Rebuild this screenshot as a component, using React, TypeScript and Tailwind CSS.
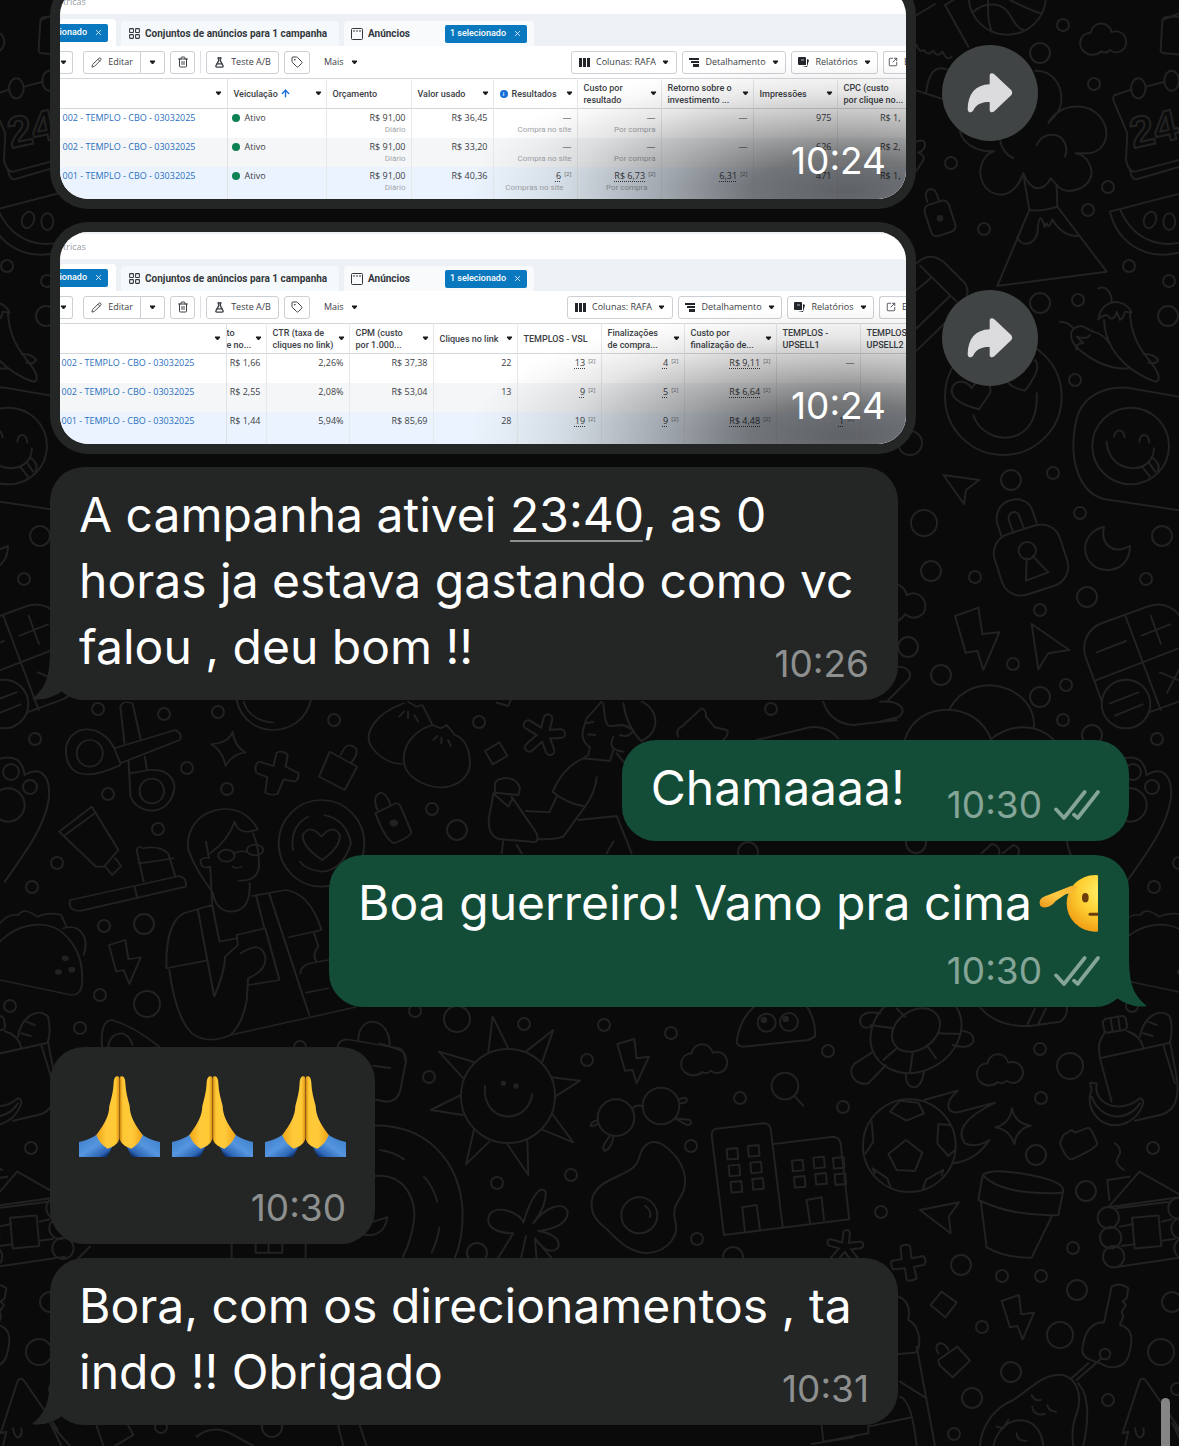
import type { ReactNode } from 'react';
import { ArrowUp, FlaskConical, LayoutGrid, Pencil, SquareArrowOutUpRight, Tag, Trash2, X } from 'lucide-react';

// --- Wallpaper ---

// x, y, radius
const dots = [
    [1063, 25, 6], [1040, 53, 10], [1094, 84, 6], [951, 163, 6], [984, 229, 6], [1108, 187, 6], [1088, 210, 6],
    [1129, 266, 6], [1169, 281, 6], [1168, 316, 10], [1040, 303, 10], [1078, 300, 6], [1075, 380, 6], [910, 443, 12],
    [1011, 480, 10], [1053, 473, 6], [924, 523, 13], [1080, 513, 6], [1162, 536, 10], [931, 571, 10], [975, 577, 6],
    [1146, 579, 6], [1087, 597, 10], [1040, 610, 6], [908, 647, 10], [1013, 664, 6], [941, 675, 10], [1066, 685, 6],
    [1040, 697, 10], [1063, 720, 6], [1092, 735, 10], [1157, 739, 6], [1133, 772, 8], [1152, 787, 7], [1154, 887, 6],
    [1179, 863, 6], [1132, 1006, 6], [916, 843, 10], [98, 709, 6], [164, 714, 6], [218, 712, 6], [334, 720, 6],
    [187, 768, 6], [108, 794, 6], [227, 789, 6], [158, 829, 6], [104, 926, 6], [144, 924, 10], [100, 995, 6],
    [147, 1004, 13], [80, 1028, 6], [479, 722, 6], [432, 809, 6], [457, 830, 10], [415, 1011, 6], [457, 1019, 13],
    [524, 1024, 6], [604, 1025, 6], [300, 1047, 6], [429, 1077, 6], [587, 1060, 6], [671, 1033, 6], [740, 1098, 6],
    [691, 1146, 6], [571, 1175, 6], [497, 1183, 6], [697, 1239, 6], [477, 1253, 10], [733, 1257, 10], [828, 1051, 6],
    [1040, 1049, 6], [1070, 1066, 13], [843, 1107, 6], [1041, 1098, 6], [1036, 1155, 10], [1153, 1148, 6],
    [1086, 1191, 10], [881, 1212, 6], [1073, 1248, 6], [961, 1265, 10], [1002, 1276, 6], [1041, 1276, 6],
    [1077, 1290, 10], [1172, 1302, 10], [982, 1327, 6], [1060, 1335, 13], [1161, 1352, 13], [1011, 1372, 10],
    [972, 1398, 10], [1108, 1400, 6], [1177, 1389, 6], [954, 1434, 6], [161, 1427, 6], [272, 1427, 10],
    [771, 709, 6], [748, 852, 10],
];

const windows = [
    [1040, 447], [1104, 438], [1046, 497], [1111, 488], [1052, 546], [1117, 537],
    [1236, 482], [1300, 473], [1242, 531], [1306, 522], [1359, 474], [1364, 523],
];

const cloud = 'M560 160C530 145 535 100 572 98C580 62 625 62 635 96C675 85 692 130 668 150C655 160 640 158 630 150C620 160 610 158 604 154C590 168 570 165 560 160Z';

function Wallpaper() {
    return (
        <svg aria-hidden="true" className="absolute top-0 left-0" width="1179" height="1446" fill="none" stroke="#222222" strokeLinecap="round" strokeLinejoin="round">
            <g id="doodles">
                <g strokeWidth="2">
                    {dots.map(([x, y, r]) => <circle key={`${x}-${y}`} cx={x} cy={y} r={r} />)}
                </g>

                {/* Ball, volcano, calendar, melon, peppers, smileys */}
                <g transform="translate(900 0) scale(.3333)" strokeWidth="6">
                    <circle cx="322" cy="-12" r="116" />
                    <path d="M220 35C260 0 310 10 330 45S360 88 372 90M265 -5C262 40 265 70 275 95M330 0C370 20 400 35 422 40" />
                    <path d="M50 45L105 12M160 0L135 15L205 140M50 135Q58 160 72 150Q85 170 100 152Q112 175 128 155Q140 185 155 170M78 280C85 220 105 195 140 208M50 272L130 298" />
                    <path d={cloud} />
                    <path d="M850 50L800 50Q788 52 787 65L782 150Q781 160 795 160L850 165M787 60L837 40" />
                    <path d="M405 212C460 210 490 260 483 310C480 335 460 355 445 368C480 310 560 305 600 350C635 395 620 450 570 460L527 460C565 465 580 510 573 530C560 570 500 585 475 560L452 535C440 560 425 565 410 565C390 560 378 540 370 520C355 560 335 585 300 584C250 580 235 530 243 500C248 475 265 460 282 453C230 458 190 430 180 395M300 420C305 450 320 465 340 475M410 435C430 395 480 395 495 430Q503 450 495 470" />
                    <path d="M370 520L388 630L292 858L620 815L472 620L470 555M388 630Q430 635 472 620M352 710C360 740 400 740 412 700Q415 655 422 655Q430 660 434 682L440 670Q446 690 457 658C480 700 510 710 540 708" />
                    <path d="M695 268L645 285Q636 290 642 305L682 400L678 480Q685 515 705 515L860 474M690 510Q695 540 710 538L860 494M738 260L795 245" />
                    <ellipse cx="715" cy="265" rx="22" ry="30" />
                    <ellipse cx="815" cy="242" rx="22" ry="30" />
                    <text x="700" y="445" fontSize="130" fontWeight="700" transform="rotate(-12 700 445)" className="font-['Liberation_Sans',sans-serif]">24</text>
                    <path d="M630 635L900 565M630 635C660 760 790 800 900 730M662 632C700 720 780 745 850 725" />
                    <ellipse cx="750" cy="660" rx="18" ry="25" transform="rotate(20 750 660)" />
                    <ellipse cx="808" cy="665" rx="18" ry="25" />
                    <path d="M50 425Q75 415 75 435Q75 450 55 458Q75 465 70 480L50 512" />
                    <rect x="82" y="606" width="76" height="98" rx="18" transform="rotate(-18 120 655)" />
                    <path d="M82 605C70 575 85 565 97 568C110 570 112 590 117 602" />
                    <circle cx="120" cy="655" r="7" fill="#222222" />
                    <path d="M50 790C80 760 110 770 130 785L195 850Q208 870 200 885M60 797L170 905M95 832L50 870M150 888L50 985M185 920L50 1052" />
                    <path d="M480 965Q505 965 520 985M545 1055C500 1020 505 980 545 978L580 995M545 1055C590 1090 640 1110 690 1105M595 865C620 855 635 880 635 905M595 958C600 920 630 900 660 908Q685 915 695 938L675 935Q670 955 660 960L650 935Q645 960 630 955Q622 935 595 958M612 960C615 1040 670 1110 765 1145Q780 1145 775 1125C765 1085 695 1050 690 940M730 1062Q760 1060 775 1080Q765 1095 745 1088M580 995C600 1000 615 1010 628 1030M530 1050Q525 1030 550 1030L530 1010Q560 1020 570 1005" />
                    <circle cx="310" cy="1190" r="175" />
                    <path d="M220 1245C250 1340 420 1350 410 1180M237 1228C180 1215 145 1190 158 1160C170 1140 200 1140 215 1165C230 1130 280 1140 270 1180ZM375 1172C340 1165 315 1150 320 1125M375 1172C400 1140 425 1100 405 1080" />
                    <circle cx="692" cy="1338" r="115" />
                    <path d="M620 1325C625 1425 760 1430 762 1345M642 1310C648 1285 670 1285 674 1312M718 1325C722 1298 745 1298 748 1328M728 1402L750 1430M745 1385L765 1415M755 1372Q785 1390 772 1415" />
                    <path d="M860 1194L680 1163C600 1160 555 1195 535 1240C500 1350 525 1490 630 1500L900 1540" />
                </g>

                {/* Padlock, moon, bolt, calculator */}
                <g transform="translate(880 460) scale(.3333)" strokeWidth="6">
                    <path d="M190 45L298 60L258 90L252 132ZM455 492L568 570L505 580L475 628Z" />
                    <rect x="350" y="205" width="206" height="190" rx="60" transform="rotate(-18 453 300)" />
                    <path d="M365 230L350 185C345 110 435 100 455 145L470 188M400 218L386 180C385 150 415 150 418 170L432 205M440 295L438 362L505 337L458 288" />
                    <circle cx="442" cy="272" r="26" />
                    <path d="M672 200C590 220 600 330 685 330C725 328 750 300 750 258C700 285 660 255 672 200Z" />
                    <path d="M225 468L295 443L307 522L358 517L310 630L292 572L257 578Z" />
                    <rect x="632" y="455" width="310" height="300" rx="80" transform="rotate(-20 787 605)" />
                    <path d="M735 465L842 750M645 662L930 552M650 577L738 543M785 527L870 493M812 467L843 552M840 637L900 662M862 697L897 630" />
                    <circle cx="738" cy="732" r="73" fill="#0a0a0a" />
                    <path d="M690 730L775 697M705 767L788 733" />
                    <path d="M75 838C110 720 290 720 333 838C390 790 470 790 520 838M210 745C280 620 470 680 462 803" />
                    <path d="M45 370Q75 380 80 405C120 385 150 430 130 460Q105 485 75 463Q65 480 45 485M40 622C80 615 105 640 80 665L25 720M0 725C60 720 85 750 55 772L0 785" />
                </g>

                {/* Palette edge */}
                <g transform="translate(900 740) scale(.3333)" strokeWidth="6">
                    <circle cx="690" cy="195" r="50" />
                    <path d="M660 58Q730 35 740 105C790 75 820 110 812 180C800 260 740 340 680 425M500 300Q505 330 515 350M245 340L275 312Q300 315 298 342M308 340L340 315Q362 320 355 345" />
                </g>

                {/* Scissors, dumplings, reader, coffee, taco */}
                <g transform="translate(0 640) scale(.408 .3333)" strokeWidth="5">
                    <path d="M305 310L295 200Q300 180 325 190L345 300M280 325L430 270Q450 285 440 300L295 370ZM280 325C250 250 175 250 162 320C158 400 200 430 295 375M315 365L320 470C340 530 420 530 428 440Q420 385 365 390L318 400M355 350L360 388" />
                    <ellipse cx="220" cy="340" rx="32" ry="40" />
                    <ellipse cx="372" cy="453" rx="30" ry="37" />
                    <path d="M570 275Q575 320 602 338Q570 340 553 378Q545 330 517 312Q560 310 570 275Z" />
                    <path d="M678 338Q695 330 705 345L700 380L732 400Q732 420 722 425L695 418L680 462Q665 468 650 458L655 412L628 398Q622 375 635 365L670 378Z" />
                    <path d="M808 335L875 380L845 450L782 410ZM835 345Q850 300 872 325Q880 340 860 370" />
                    <path d="M990 190C920 220 890 280 910 320Q940 370 985 372M1060 255C990 280 970 370 1010 410C1070 470 1150 440 1152 370Q1150 300 1115 285M1060 255L1080 265L1095 255L1115 285M1000 185L1020 200L1035 195L1060 255M978 230L990 215M1000 215V235M1015 225L1025 245M1062 300L1072 288M1082 292V310M1098 300L1105 318" />
                    <path d="M580 180C600 300 740 300 762 180M597 185Q610 240 670 248" />
                    <path d="M145 575L225 500L290 630L255 680L235 680ZM160 585L232 520M258 680L275 705L297 678L282 655" />
                    <path d="M172 780L440 708Q460 715 455 740L200 812Q165 815 172 780ZM352 725L335 630Q340 615 350 625Q390 615 412 640L430 710M340 670Q380 665 425 655M330 742L337 775" />
                    <path d="M520 790L515 680Q490 690 492 660Q500 650 512 655L505 605M515 640Q560 600 575 545Q585 590 632 568Q600 500 540 508C470 520 450 600 465 640Q480 690 520 755M620 580Q635 620 635 680Q630 725 585 722M522 760Q530 815 570 815Q615 810 612 730M572 640Q590 630 605 636M570 680Q580 688 592 680" />
                    <ellipse cx="555" cy="647" rx="20" ry="18" />
                    <ellipse cx="625" cy="630" rx="20" ry="16" />
                    <ellipse cx="788" cy="610" rx="105" ry="130" />
                    <path d="M718 630Q710 560 755 530M795 525Q850 540 860 610Q840 690 790 695Q750 690 735 665M790 660Q740 620 742 585Q760 550 788 590Q815 550 833 585Q835 620 790 660Z" />
                    <path d="M920 520L970 490Q978 488 982 500L1008 575Q1008 590 965 610Q945 600 920 520ZM925 510Q910 465 935 458Q950 465 957 495" />
                    <circle cx="965" cy="549" r="8" fill="#222222" />
                    <path d="M520 795L450 820Q405 850 408 985L505 962M485 810L525 1070Q550 1000 552 950L583 915L580 885L650 865L685 1020L610 1035M520 795L538 905L580 895M618 768L700 750Q760 760 788 870L708 892M628 768L648 865M660 762L758 1125M590 940Q640 900 650 950Q655 990 608 1015L605 1080Q595 1150 565 1185Q510 1215 470 1180Q430 1130 415 990M565 1185L870 1102M805 960L760 970Q735 980 737 1000M750 1058L805 1045M770 880L780 920Q765 940 775 965" />
                    <path d="M267 915L307 900L315 958L345 952L317 1032L303 990L285 995Z" />
                    <path d="M0 850Q20 820 45 825Q60 800 90 830Q120 815 150 825L162 858M-30 960C10 850 110 830 155 880C200 930 205 990 200 1040Q195 1065 175 1065L0 1020L-60 1010M155 865C195 850 220 890 205 945" />
                    <g fill="#222222">
                        <circle cx="160" cy="955" r="6" />
                        <circle cx="143" cy="996" r="6" />
                        <circle cx="176" cy="989" r="6" />
                    </g>
                    <path d="M250 1220Q245 1140 275 1140Q330 1160 390 1220M265 1220Q270 1180 300 1180Q320 1190 325 1215M878 1200C880 1120 955 1130 955 1215M828 1220Q830 1195 860 1200L980 1225Q995 1240 992 1260" />
                </g>

                {/* Runner */}
                <g transform="translate(440 690) scale(.3333)" strokeWidth="6">
                    <path d="M135 183L178 157L202 198L158 223ZM170 38L205 48L212 30" />
                    <path d="M485 35L440 85L435 100Q415 150 450 172L445 195L430 205L510 213L520 180M440 100L460 95M445 133L465 135M430 205Q370 230 338 305Q380 340 430 348M470 262Q465 310 435 350L370 440Q340 450 290 447M350 320L328 367L258 363M215 320L290 430Q300 460 275 455L175 447Q130 430 155 345M155 340L160 310L205 350L218 325M165 290Q160 270 190 265Q230 260 240 295L235 315L165 308ZM415 390L530 378L575 490M530 190L555 220M490 40Q495 110 510 108L550 105L580 120Q570 145 540 135M520 140Q500 180 550 185M550 40Q560 110 605 155M605 35C660 60 660 130 605 152M190 450L185 490M230 465L245 490M520 455L500 490" />
                    <path d="M715 140Q705 120 725 110L785 55Q800 60 798 80L825 112L860 120Q870 130 850 150M950 150L1110 112Q1160 105 1195 145M1150 35Q1170 100 1240 105L1370 90" />
                    <path d="M312 133L324 86M312 133L362 131M312 133L330 182M312 133L268 172M312 133L264 104" strokeWidth="32" />
                    <path d="M312 133L324 86M312 133L362 131M312 133L330 182M312 133L268 172M312 133L264 104" strokeWidth="20" stroke="#0a0a0a" />
                </g>

                {/* Sun, glasses, egg, buildings */}
                <g transform="translate(380 1000) scale(.3333)" strokeWidth="6">
                    <circle cx="384" cy="288" r="141" />
                    <path d="M325 155L338 50L385 145M437 155L520 90L485 190M515 232L600 242L525 290M517 342L580 427L485 388M442 418L445 525L382 432M328 425L258 493L282 388M248 345L152 330L243 285M250 235L177 155L285 187M315 258C305 370 440 380 457 283" />
                    <circle cx="370" cy="250" r="5" fill="#222222" />
                    <circle cx="408" cy="258" r="5" fill="#222222" />
                    <path d="M712 132L763 117L770 175L807 170L770 250L758 210L735 212Z" />
                    <path d={cloud} transform="translate(363 62)" />
                    <circle cx="708" cy="353" r="55" />
                    <circle cx="843" cy="318" r="55" />
                    <path d="M757 328Q765 312 790 318M895 300Q925 285 920 305Q910 312 897 308M885 355L930 360Q940 375 920 375L885 355M655 360Q630 365 632 378Q645 380 655 370M690 408Q660 445 675 453Q695 445 700 410" />
                    <path d="M780 465C790 430 820 415 850 435C900 470 925 520 912 570C895 610 875 620 885 660C900 700 870 755 800 760C730 755 700 700 660 670C620 630 625 570 690 540C740 515 770 510 780 465Z" />
                    <circle cx="778" cy="646" r="54" />
                    <path d="M795 618Q815 630 810 652" />
                    <path d="M1032 705L995 405Q995 388 1010 386L1150 370Q1168 370 1172 385L1208 680M1180 435Q1182 430 1200 430L1360 410Q1378 412 1382 430L1408 658L1032 705M1095 695L1087 622L1130 615L1140 690M1290 668L1280 600L1325 592L1332 660" />
                    {windows.map(([x, y]) => <rect key={`${x}-${y}`} x={x} y={y} width="32" height="32" transform={`rotate(-5 ${x} ${y})`} />)}
                    <path d="M1070 125Q1080 50 1135 10M1275 10Q1310 60 1305 110L1285 120L1090 140Q1072 140 1070 125" />
                    <circle cx="1160" cy="68" r="27" />
                    <circle cx="1227" cy="66" r="27" />
                    <circle cx="1152" cy="60" r="7" fill="#222222" />
                    <circle cx="1217" cy="57" r="7" fill="#222222" />
                    <circle cx="1215" cy="258" r="40" />
                    <path d="M1243 288L1270 317" />
                    <path d="M430 668C425 640 350 610 328 645C310 690 370 700 400 700L350 780M430 668C450 600 480 550 497 575C500 610 475 650 460 670C490 625 550 600 563 635C565 675 510 690 475 693C520 700 545 720 533 745C510 765 480 740 465 715L470 780M465 715L520 780M438 708L422 780" />
                    <path d="M-60 380C140 355 245 490 248 640Q248 720 225 772M0 450Q40 455 72 478M132 530Q160 560 172 605M178 683Q172 725 155 757M-30 530C80 510 110 610 102 660Q95 720 68 772M22 652C15 700 -20 715 -60 700M22 652L-20 665" />
                    <path d="M0 130L60 150Q78 155 78 185L60 275Q50 305 20 305L-20 298M-20 197L30 204" />
                </g>

                {/* Turtle, football, pot, cabin, key */}
                <g transform="translate(800 1000) scale(.3333)" strokeWidth="6">
                    <ellipse cx="348" cy="95" rx="142" ry="118" transform="rotate(-30 348 95)" />
                    <ellipse cx="348" cy="90" rx="78" ry="58" transform="rotate(-35 348 90)" />
                    <path d="M240 40Q180 30 180 65Q185 90 215 80M220 155L165 190C135 220 170 260 205 250L258 195M318 218Q315 262 345 262Q368 255 372 212M482 92Q525 95 520 125Q505 150 458 135M212 75L280 85M250 180L290 145M330 218L338 158M408 175L380 135M482 102L415 100M290 25L315 50" />
                    <path d="M540 22C580 70 640 80 690 78L780 65Q805 50 800 22M682 75L705 25M715 72L738 25" />
                    <path d={cloud} transform="translate(-10 92)" />
                    <circle cx="328" cy="437" r="139" />
                    <path d="M318 420L367 458L345 513L290 510L265 462ZM270 335L300 302L355 308L372 340L320 362ZM450 375L415 372L412 430L445 468L465 450M215 365L220 425L197 460M218 505L262 535L272 562M430 510L378 540L368 570M218 505L225 520M430 510L425 525" />
                    <path d="M372 300L473 272C430 310 440 345 480 335L585 308C500 350 465 390 495 430Q530 445 568 420Q530 480 460 490" />
                    <path d="M636 325Q645 370 692 377Q650 385 643 433Q630 390 587 382Q630 370 636 325Z" />
                    <path d="M790 405L815 390L825 398L865 383Q875 385 892 430Q890 445 815 478Q800 480 780 430Z" />
                    <path d="M548 525Q570 505 660 520Q790 540 790 572L775 645Q640 650 535 600ZM548 525Q600 580 750 580Q790 580 790 572M543 608L560 742Q620 775 695 773L755 650" />
                    <path d="M360 630L477 607L447 648L452 700Z" />
                    <rect x="910" y="52" width="70" height="42" rx="12" transform="rotate(-10 945 73)" />
                    <path d="M932 55L938 95M955 52L960 92M915 97C890 130 897 150 900 175L1110 128M900 175L935 305M980 93Q1020 105 1030 142M1020 110C1030 50 1080 20 1110 50Q1120 90 1110 125L1130 230Q1145 330 1080 345L1005 362M1090 135L1125 250M1045 65L1070 75M1030 100L1058 108" />
                    <path d="M870 248L890 250Q885 275 900 295C930 330 985 325 1020 295Q1035 300 1028 315C1000 390 900 400 872 320Q865 290 875 270ZM875 290C900 360 980 370 1020 310" />
                    <path d="M1018 515L925 622L1150 590ZM928 600L922 540L988 530M950 625L1110 605M960 680L1000 672M965 738L1005 733M1085 665L1115 658M1085 722L1125 716M945 802L1160 770M945 430Q970 450 955 470T972 510" />
                    <rect x="1000" y="650" width="80" height="92" transform="rotate(-5 1040 696)" />
                    <circle cx="925" cy="653" r="32" />
                    <circle cx="932" cy="713" r="32" />
                    <circle cx="941" cy="770" r="32" />
                    <circle cx="1137" cy="625" r="32" />
                    <circle cx="1146" cy="685" r="32" />
                    <circle cx="1155" cy="745" r="32" />
                    <path d="M135 740L140 700M135 740L180 735M135 740L92 728M135 740L100 780M135 740L165 780" strokeWidth="26" />
                    <path d="M135 740L140 700M135 740L180 735M135 740L92 728M135 740L100 780M135 740L165 780" strokeWidth="14" stroke="#0a0a0a" />
                    <path d="M302 740Q315 730 330 738L335 775L370 768Q382 780 372 795L342 800L350 835Q335 845 320 840L315 805L280 808Q270 795 275 782L305 778Z" />
                    <path d="M425 875L470 908L436 952L392 915Z" />
                    <path d="M605 903L657 885L664 943L702 938L668 1018L652 978L630 982Z" />
                    <path d="M415 1080L472 1040L510 1082L458 1132L418 1095ZM415 1060C395 1030 430 1015 445 1050" />
                    <path d="M912 968L935 860Q960 845 985 865L980 895L968 905L978 915L965 935L970 950L960 975C1000 985 1000 1020 985 1070C970 1110 925 1105 905 1092C880 1080 840 1080 848 1040C855 990 880 965 912 968ZM905 1075L830 1140M865 1090L815 1135" />
                    <circle cx="915" cy="1062" r="16" />
                    <path d="M540 1338C545 1270 590 1220 640 1200C700 1160 730 1120 790 1125C840 1140 845 1200 830 1240C810 1290 820 1338 820 1338M835 1150Q880 1200 850 1338M580 1338C600 1240 720 1230 730 1338M695 1185Q705 1205 722 1200M742 1215Q745 1235 768 1235M697 1220Q700 1250 735 1242M650 1300Q650 1325 680 1322M590 1280L610 1285L625 1260" />
                    <path d="M975 1338L985 1295L968 1300L1020 1140Q1030 1130 1040 1145L1140 1290L1120 1275L1150 1338M1005 1285Q1010 1315 1022 1312Q1035 1305 1030 1285" />
                    <path d="M295 890Q335 905 325 960C365 980 365 1050 345 1058L295 1062M350 1040L405 1338M300 1145L380 1195M300 1190Q335 1200 350 1338M205 1280L335 1252M65 1278L70 1325L205 1300V1278M35 1332L160 1312" />
                </g>

                <g transform="translate(0 1030) scale(.3333)" strokeWidth="6">
                    <path d="M695 642V683M917 642V683M767 642V668H847V642M806 642V668M590 1220Q640 1180 700 1215L760 1248M1015 1188L1030 1248M1080 1188L1100 1248M290 1188L310 1248M345 1248L400 1215L385 1188M150 1180L210 1248M270 650L220 700" />
                </g>
            </g>
            <use href="#doodles" x="-1122" />
            <use href="#doodles" x="1122" />
        </svg>
    );
}

// --- Ads manager screenshots ---

type Cell = { value: string; sub?: string; note?: boolean };
type Column = { width: string; label: string; caret?: boolean; info?: boolean; sorted?: boolean; cells: Cell[] };

const campaigns = ['002 - TEMPLO - CBO - 03032025', '002 - TEMPLO - CBO - 03032025', '001 - TEMPLO - CBO - 03032025'];
const rowColors = ['bg-white', 'bg-[#f4f6f8]', 'bg-[#ebf4fe]'];

const deliveryColumns: Column[] = [
    { width: 'w-[99px]', label: 'Veiculação', caret: true, sorted: true, cells: [{ value: 'Ativo' }, { value: 'Ativo' }, { value: 'Ativo' }] },
    { width: 'w-[85px]', label: 'Orçamento', cells: [{ value: 'R$ 91,00', sub: 'Diário' }, { value: 'R$ 91,00', sub: 'Diário' }, { value: 'R$ 91,00', sub: 'Diário' }] },
    { width: 'w-[82px]', label: 'Valor usado', caret: true, cells: [{ value: 'R$ 36,45' }, { value: 'R$ 33,20' }, { value: 'R$ 40,36' }] },
    { width: 'w-[84px]', label: 'Resultados', caret: true, info: true, cells: [{ value: '—', sub: 'Compra no site' }, { value: '—', sub: 'Compra no site' }, { value: '6', sub: 'Compras no site', note: true }] },
    { width: 'w-[84px]', label: 'Custo por\nresultado', caret: true, cells: [{ value: '—', sub: 'Por compra' }, { value: '—', sub: 'Por compra' }, { value: 'R$ 6,73', sub: 'Por compra', note: true }] },
    { width: 'w-[92px]', label: 'Retorno sobre o\ninvestimento ...', caret: true, cells: [{ value: '—' }, { value: '—' }, { value: '6,31', note: true }] },
    { width: 'w-[84px]', label: 'Impressões', caret: true, cells: [{ value: '975' }, { value: '626' }, { value: '471' }] },
    { width: 'w-[69px]', label: 'CPC (custo\npor clique no...', cells: [{ value: 'R$ 1,' }, { value: 'R$ 2,' }, { value: 'R$ 1,' }] },
];

const clickColumns: Column[] = [
    { width: 'w-[40px]', label: 'to\ne no...', caret: true, cells: [{ value: 'R$ 1,66' }, { value: 'R$ 2,55' }, { value: 'R$ 1,44' }] },
    { width: 'w-[83px]', label: 'CTR (taxa de\ncliques no link)', caret: true, cells: [{ value: '2,26%' }, { value: '2,08%' }, { value: '5,94%' }] },
    { width: 'w-[84px]', label: 'CPM (custo\npor 1.000...', caret: true, cells: [{ value: 'R$ 37,38' }, { value: 'R$ 53,04' }, { value: 'R$ 85,69' }] },
    { width: 'w-[84px]', label: 'Cliques no link', caret: true, cells: [{ value: '22' }, { value: '13' }, { value: '28' }] },
    { width: 'w-[84px]', label: 'TEMPLOS - VSL', cells: [{ value: '13', note: true }, { value: '9', note: true }, { value: '19', note: true }] },
    { width: 'w-[83px]', label: 'Finalizações\nde compra...', caret: true, cells: [{ value: '4', note: true }, { value: '5', note: true }, { value: '9', note: true }] },
    { width: 'w-[92px]', label: 'Custo por\nfinalização de...', caret: true, cells: [{ value: 'R$ 9,11', note: true }, { value: 'R$ 6,64', note: true }, { value: 'R$ 4,48', note: true }] },
    { width: 'w-[84px]', label: 'TEMPLOS -\nUPSELL1', cells: [{ value: '—' }, { value: '—' }, { value: '1', note: true }] },
    { width: 'w-[46px]', label: 'TEMPLOS\nUPSELL2', cells: [{ value: '' }, { value: '' }, { value: '' }] },
];

function Caret() {
    return (
        <svg width="7" height="5" viewBox="0 0 7 5" className="shrink-0" aria-hidden="true">
            <path d="M1 1H6L3.500 4Z" fill="#16181b" stroke="#16181b" strokeLinejoin="round" />
        </svg>
    );
}

function ToolButton({ className = '', label, children }: { className?: string; label?: string; children: ReactNode }) {
    return (
        <button aria-label={label} className={`flex h-[23px] shrink-0 items-center justify-center gap-[6px] rounded-[3px] border border-[#ccd0d4] bg-white whitespace-nowrap ${className}`}>
            {children}
        </button>
    );
}

function SelectedBadge({ label }: { label: string }) {
    return (
        <span className="flex h-[18px] shrink-0 items-center gap-[7px] rounded-[2px] bg-[#0a78be] px-[5px] text-[9px] font-medium whitespace-nowrap text-white">
            {label}
            <X size={9} />
        </span>
    );
}

function AdsManager({ columns, nameWidth, exportWidth }: { columns: Column[]; nameWidth: string; exportWidth: string }) {
    return (
        <div className="flex h-[212px] flex-col overflow-hidden bg-white font-['Open_Sans',sans-serif] text-[9px] text-[#3c4045]">
            <div className="h-[27px] shrink-0 border-t-2 border-[#eef1f4] pt-[7px] pl-[3px] leading-[12px] text-[#9a9da1]">tricas</div>

            {/* Tabs */}
            <div className="flex h-[32px] shrink-0 items-end gap-[5px] bg-[#edf1f5] font-['Roboto',sans-serif] text-[10px] font-bold whitespace-nowrap text-[#33373c]">
                <div className="flex h-[27px] w-[56px] items-center justify-end rounded-t bg-white pr-2">
                    <SelectedBadge label="cionado" />
                </div>
                <div className="flex h-[25px] w-[218px] items-center gap-1 rounded-t bg-[#f6f9fb] px-[7px]">
                    <LayoutGrid size={13} strokeWidth={2} className="shrink-0" />
                    Conjuntos de anúncios para 1 campanha
                </div>
                <div className="flex h-[25px] w-[190px] items-center gap-[5px] rounded-t bg-[#f8fafc] px-[7px]">
                    <svg width="12" height="12" viewBox="0 0 12 12" fill="none" stroke="#33373c" aria-hidden="true">
                        <rect x="0.5" y="0.5" width="11" height="11" rx="1" />
                        <path d="M2 3H4M5 3H7M8 3H10" />
                    </svg>
                    Anúncios
                    <span className="flex-1" />
                    <SelectedBadge label="1 selecionado" />
                </div>
            </div>

            {/* Toolbar */}
            <div className="flex h-[32px] shrink-0 items-center bg-white">
                <ToolButton label="Criar" className="w-[13px] justify-start rounded-l-none border-l-0"><Caret /></ToolButton>
                <ToolButton className="ml-[10px] w-[58px] rounded-r-none"><Pencil size={11} strokeWidth={2} />Editar</ToolButton>
                <ToolButton label="Opções de edição" className="w-[24px] rounded-l-none border-l-0"><Caret /></ToolButton>
                <ToolButton label="Excluir" className="ml-[5px] w-[25px]"><Trash2 size={12} strokeWidth={2} /></ToolButton>
                <span className="mx-[5px] h-[22px] w-px bg-[#dfe2e5]" />
                <ToolButton className="w-[73px]"><FlaskConical size={11} strokeWidth={3} />Teste A/B</ToolButton>
                <ToolButton label="Etiquetas" className="ml-[5px] w-[26px]"><Tag size={12} strokeWidth={2} /></ToolButton>
                <button className="ml-[14px] flex items-center gap-[7px]">Mais<Caret /></button>
                <span className="flex-1" />
                <ToolButton className="w-[106px]">
                    <svg width="11" height="9" aria-hidden="true"><path d="M0 0H3V9H0ZM4 0H7V9H4ZM8 0H11V9H8Z" fill="#22262b" /></svg>
                    Colunas: RAFA<Caret />
                </ToolButton>
                <ToolButton className="ml-[5px] w-[104px]">
                    <svg width="10" height="9" aria-hidden="true"><path d="M0 0H10V2H0ZM2 3H10V5H2ZM4 6H10V9H4Z" fill="#22262b" /></svg>
                    Detalhamento<Caret />
                </ToolButton>
                <ToolButton className="ml-[5px] w-[87px]">
                    <svg width="11" height="10" aria-hidden="true">
                        <path d="M0 1Q0 0 1 0H7Q8 0 8 1V8H1Q0 8 0 7ZM9 2L11 3L9 10L4 9H9Z" fill="#22262b" />
                        <path d="M3 2H6V4H3Z" fill="#6b7076" />
                    </svg>
                    Relatórios<Caret />
                </ToolButton>
                <ToolButton className={`ml-[5px] overflow-hidden rounded-r-none border-r-0 pl-[7px] ${exportWidth}`}>
                    <SquareArrowOutUpRight size={10} strokeWidth={2} className="shrink-0" />E
                </ToolButton>
            </div>

            <table className="w-full table-fixed border-collapse border-t border-[#d5d8db]">
                <thead>
                    <tr className="h-[30px] border-b border-[#d5d8db] font-['Roboto',sans-serif] text-[9px] leading-[12px]">
                        <th className={`${nameWidth} border-r border-[#dfe2e5] pr-[5px]`}>
                            <span className="sr-only">Campanha</span>
                            <span className="flex justify-end"><Caret /></span>
                        </th>
                        {columns.map(col => (
                            <th key={col.label} className={`${col.width} overflow-hidden border-r border-[#e6e8ea] p-0 text-left font-medium`}>
                                <span className={`flex items-center whitespace-pre ${col.width === 'w-[40px]' ? '' : 'pl-[6px]'}`}>
                                    {col.info && <span className="mr-1 flex size-2 shrink-0 items-center justify-center rounded-full bg-[#1670d8] text-[6px] text-white">i</span>}
                                    {col.label}
                                    {col.sorted && <ArrowUp size={11} strokeWidth={3} color="#1670d8" className="ml-[2px] shrink-0" />}
                                    <span className="flex-1" />
                                    {col.caret && <span className="pr-1"><Caret /></span>}
                                </span>
                            </th>
                        ))}
                    </tr>
                </thead>
                <tbody>
                    {campaigns.map((name, row) => (
                        <tr key={row} className={`h-[29px] align-top leading-[12px] last:h-[33px] ${rowColors[row]}`}>
                            <td className="border-r border-[#dfe2e5] p-0 pt-[3px] pr-[31px]">
                                <span className="flex justify-end overflow-hidden">
                                    <a href="#campanha" className="whitespace-nowrap text-[#2a6fc0]">{name}</a>
                                </span>
                            </td>
                            {columns.map(col => (
                                <td key={col.label} className="overflow-hidden border-r border-[#e6e8ea] p-0 pt-[3px] pr-[5px] text-right whitespace-nowrap">
                                    {col.sorted ? (
                                        <span className="flex items-center gap-[5px] pl-1"><span className="size-2 rounded-full bg-[#0d8054]" />{col.cells[row].value}</span>
                                    ) : (
                                        <>
                                            <span className={col.cells[row].note ? 'underline decoration-dotted underline-offset-2' : ''}>{col.cells[row].value}</span>
                                            {col.cells[row].note && <span className="pl-[3px] align-top text-[6px] leading-[8px] text-[#777b80]">[2]</span>}
                                        </>
                                    )}
                                    {col.cells[row].sub && <span className={`block font-['Roboto',sans-serif] text-[8px] text-[#a3a6aa] ${col.cells[row].note ? 'pr-2' : ''}`}>{col.cells[row].sub}</span>}
                                </td>
                            ))}
                        </tr>
                    ))}
                </tbody>
            </table>
        </div>
    );
}

function ImageMessage({ time, children }: { time: string; children: ReactNode }) {
    return (
        <div className="flex items-center gap-[26px]">
            <div className="w-[866px] rounded-[38px] bg-[#242626] p-[10px]">
                <div className="relative overflow-hidden rounded-[28px]">
                    {children}
                    <div className="absolute inset-0 bg-[radial-gradient(ellipse_380px_130px_at_93%_96%,rgba(0,0,0,0.6),rgba(0,0,0,0.52)_25%,rgba(0,0,0,0.3)_50%,rgba(0,0,0,0.1)_75%,rgba(0,0,0,0.03)_90%,transparent)]" />
                    <time className="absolute right-5 bottom-5 text-[37px] leading-[36px] text-white">{time}</time>
                </div>
            </div>
            <button aria-label="Encaminhar" className="flex size-24 shrink-0 items-center justify-center rounded-full bg-[#414444]">
                <svg width="46" height="40" viewBox="0 0 138 120" fill="#dcdcde" aria-hidden="true">
                    <path d="M68 8C68 0 76 -1 82 4L133 52Q138 59 133 66L82 115C76 120 68 119 68 111V87C45 87 29 92 19 112C13 122 2 119 2 108C3 62 25 36 68 34Z" />
                </svg>
            </button>
        </div>
    );
}

// --- Text messages ---

function Tail({ mine }: { mine?: boolean }) {
    return (
        <svg width="40" height="50" aria-hidden="true" className={`absolute bottom-0 ${mine ? '-right-[18px] -scale-x-100 text-[#144d37]' : '-left-[18px] text-[#242626]'}`}>
            <path d="M18 0C18 26 14 38 0 49C11 51 22 47 30 41L40 30V0Z" fill="currentColor" />
        </svg>
    );
}

function Ticks() {
    return (
        <svg width="46" height="30" viewBox="0 0 138 90" fill="none" stroke="currentColor" strokeWidth="11" strokeLinecap="round" strokeLinejoin="round" aria-hidden="true">
            <path d="M6 58L30 84L92 6M60 74L71 84L132 6" />
        </svg>
    );
}

type BubbleProps = { time: string; mine?: boolean; tail?: boolean; stacked?: boolean; children: ReactNode };

function Bubble({ time, mine, tail, stacked, children }: BubbleProps) {
    return (
        <div className={`relative w-fit max-w-[848px] rounded-[34px] px-[29px] ${mine ? 'self-end bg-[#144d37]' : 'bg-[#242626]'}`}>
            {tail && <Tail mine={mine} />}
            <div className="relative flow-root pt-[15px] pb-[18px] text-[48px] leading-[66px] text-white">
                {children}
                <time className={`float-right flex items-center gap-3 text-[37px] leading-[36px] ${stacked ? 'clear-both mt-[17px]' : 'mt-8 ml-[42px]'} ${mine ? 'text-[#85a598]' : 'text-[#8e9090]'}`}>
                    {time}
                    {mine && <Ticks />}
                </time>
            </div>
        </div>
    );
}

function SaluteEmoji() {
    return (
        <svg role="img" aria-label="Saudação" width="59" height="57" viewBox="0 0 177 171" className="mr-[2px] ml-[7px] shrink-0">
            <defs>
                <radialGradient id="face" cx="0.6" cy="0.3" r="0.75">
                    <stop offset="0" stopColor="#fff06a" />
                    <stop offset="0.5" stopColor="#fdd033" />
                    <stop offset="1" stopColor="#f09a12" />
                </radialGradient>
                <linearGradient id="hand" x1="0" y1="1" x2="1" y2="0">
                    <stop offset="0" stopColor="#e8951c" />
                    <stop offset="0.5" stopColor="#ffcb45" />
                    <stop offset="1" stopColor="#f5b02a" />
                </linearGradient>
            </defs>
            <circle cx="168" cy="85" r="85" fill="url(#face)" />
            <path d="M4 92C-3 76 8 66 26 61L96 33Q112 28 113 38Q108 52 80 58Q68 66 50 78Q40 92 26 96Q10 100 4 92Z" fill="url(#hand)" />
            <ellipse cx="139" cy="68" rx="10" ry="14" fill="#6b3d0c" />
            <path d="M153 118H177" stroke="#6b3d0c" strokeWidth="9" strokeLinecap="round" />
        </svg>
    );
}

function PrayEmoji() {
    return (
        <svg role="img" aria-label="Mãos juntas" width="81" height="81" viewBox="0 0 243 243">
            <defs>
                <linearGradient id="palm">
                    <stop offset="0" stopColor="#f0a416" />
                    <stop offset="0.45" stopColor="#ffc93a" />
                    <stop offset="0.85" stopColor="#ffc935" />
                    <stop offset="1" stopColor="#d98d12" />
                </linearGradient>
                <linearGradient id="sleeve" x1="0.2" y1="0" x2="1" y2="0.8">
                    <stop offset="0" stopColor="#3f7fcb" />
                    <stop offset="0.5" stopColor="#5596df" />
                    <stop offset="0.85" stopColor="#2e66b5" />
                    <stop offset="1" stopColor="#0b2d6c" />
                </linearGradient>
                <g id="arm">
                    <path d="M0 198C20 194 40 186 56 174L100 212L84 243H0Z" fill="url(#sleeve)" />
                    <path d="M117 1C108 0 105 8 104 20C103 48 96 70 91 90C90 118 80 140 52 177Q62 204 86 218C106 212 120 200 121 186V8Q121 2 117 1Z" fill="url(#palm)" />
                </g>
            </defs>
            <use href="#arm" />
            <use href="#arm" transform="translate(243 0) scale(-1 1)" />
            <path d="M122 12V188" stroke="#9b5f10" strokeWidth="3" />
        </svg>
    );
}

export default function App() {
    return (
        <main className="relative flex h-screen min-h-[600px] flex-col justify-end overflow-hidden bg-[#0a0a0a] font-['Inter',sans-serif]">
            <Wallpaper />

            <div className="relative flex shrink-0 flex-col gap-10 px-[50px] pb-[21px]">
                <div className="flex flex-col gap-[13px]">
                    <ImageMessage time="10:24"><AdsManager columns={deliveryColumns} nameWidth="w-[167px]" exportWidth="w-[23px]" /></ImageMessage>
                    <ImageMessage time="10:24"><AdsManager columns={clickColumns} nameWidth="w-[166px]" exportWidth="w-[27px]" /></ImageMessage>
                    <Bubble time="10:26" tail>
                        A campanha ativei <a href="#2340" className="underline decoration-[#8e9090] decoration-2 underline-offset-8">23:40</a>, as 0 horas ja estava gastando como vc falou , deu bom !!
                    </Bubble>
                </div>

                <div className="flex flex-col gap-[14px]">
                    <Bubble time="10:30" mine>Chamaaaa!</Bubble>
                    <Bubble time="10:30" mine tail stacked>
                        <div className="flex items-center whitespace-nowrap">Boa guerreiro! Vamo pra cima<SaluteEmoji /></div>
                    </Bubble>
                </div>

                <div className="flex flex-col gap-[14px]">
                    <Bubble time="10:30" stacked>
                        <div className="flex gap-3 pt-[14px] pb-4"><PrayEmoji /><PrayEmoji /><PrayEmoji /></div>
                    </Bubble>
                    <Bubble time="10:31" tail>Bora, com os direcionamentos , ta indo !! Obrigado</Bubble>
                </div>
            </div>

            {/* Scroll position */}
            <div className="absolute right-[9px] bottom-0 h-12 w-[9px] rounded-t-full bg-[#858585]" />
        </main>
    );
}
